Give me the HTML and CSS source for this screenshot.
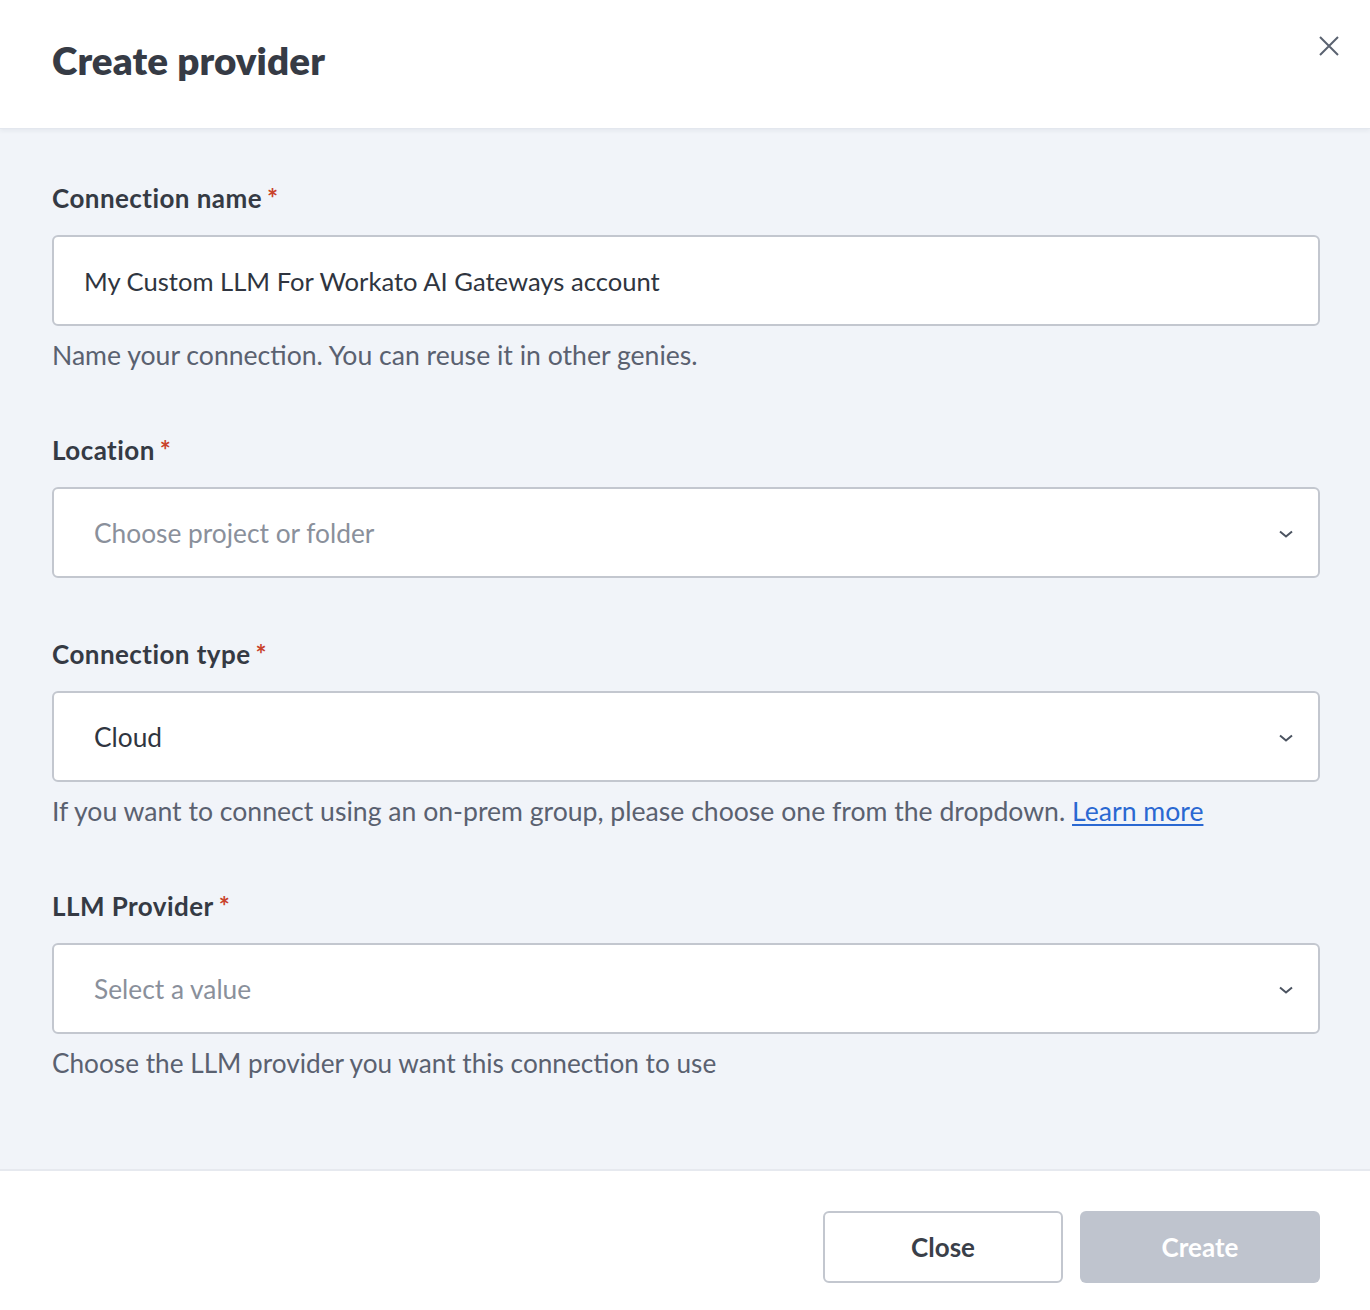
FILE: index.html
```html
<!DOCTYPE html>
<html lang="en">
<head>
<meta charset="utf-8">
<title>Create provider</title>
<link rel="stylesheet" href="styles.css">
</head>
<body>
<div class="dialog">
  <header class="dialog-header">
    <h1 class="dialog-title">Create provider</h1>
    <button class="icon-close" type="button" aria-label="Close">
      <svg width="22" height="22" viewBox="0 0 22 22"><path d="M2 2 L20 20 M20 2 L2 20" stroke="#5a6270" stroke-width="2" fill="none"/></svg>
    </button>
  </header>

  <main class="dialog-body">
    <div class="field">
      <label class="field-label">Connection name<span class="req">*</span></label>
      <div class="control control-input">My Custom LLM For Workato AI Gateways account</div>
      <p class="hint">Name your connection. You can reuse it in other genies.</p>
    </div>

    <div class="field">
      <label class="field-label">Location<span class="req">*</span></label>
      <div class="control control-select">
        <span class="placeholder">Choose project or folder</span>
        <svg class="chev" width="16" height="10" viewBox="0 0 16 10"><path d="M2 2.5 L8 7.5 L14 2.5" stroke="#4b5360" stroke-width="2" fill="none"/></svg>
      </div>
    </div>

    <div class="field">
      <label class="field-label">Connection type<span class="req">*</span></label>
      <div class="control control-select">
        <span class="value">Cloud</span>
        <svg class="chev" width="16" height="10" viewBox="0 0 16 10"><path d="M2 2.5 L8 7.5 L14 2.5" stroke="#4b5360" stroke-width="2" fill="none"/></svg>
      </div>
      <p class="hint">If you want to connect using an on-prem group, please choose one from the dropdown. <a class="link" href="#">Learn more</a></p>
    </div>

    <div class="field">
      <label class="field-label">LLM Provider<span class="req">*</span></label>
      <div class="control control-select">
        <span class="placeholder">Select a value</span>
        <svg class="chev" width="16" height="10" viewBox="0 0 16 10"><path d="M2 2.5 L8 7.5 L14 2.5" stroke="#4b5360" stroke-width="2" fill="none"/></svg>
      </div>
      <p class="hint hint-narrow">Choose the LLM provider you want this connection to use</p>
    </div>
  </main>

  <footer class="dialog-footer">
    <button class="btn btn-secondary" type="button">Close</button>
    <button class="btn btn-primary" type="button" disabled>Create</button>
  </footer>
</div>
</body>
</html>
```

FILE: styles.css
```css
* { box-sizing: border-box; }

html, body {
  margin: 0;
  padding: 0;
  background: #ffffff;
}

body {
  font-family: Lato, "Noto Sans", sans-serif;
  color: #2f3540;
  width: 1370px;
  height: 1310px;
  overflow: hidden;
}

.dialog {
  display: flex;
  flex-direction: column;
  height: 1310px;
}

.dialog-header {
  height: 129px;
  display: flex;
  align-items: flex-start;
  justify-content: space-between;
  padding: 0 30px 0 52px;
  background: #ffffff;
  border-bottom: 1px solid #e3e7ee;
  box-shadow: 0 2px 4px rgba(40, 50, 70, 0.06);
  position: relative;
  z-index: 1;
}

.dialog-title {
  margin: 37px 0 0;
  font-size: 38.6px;
  font-weight: 800;
  line-height: 46px;
  color: #363b45;
  letter-spacing: 0.1px;
}

.icon-close {
  margin-top: 35px;
  padding: 0;
  border: 0;
  background: transparent;
  width: 22px;
  height: 22px;
  cursor: pointer;
}

.dialog-body {
  flex: 1;
  background: #f1f4f9;
  padding: 53px 50px 0 52px;
  display: flex;
  flex-direction: column;
}

.field {
  display: flex;
  flex-direction: column;
  margin-bottom: 62px;
}

.field:nth-child(2) {
  margin-bottom: 60px;
}

.field-label {
  font-size: 26px;
  font-weight: 700;
  line-height: 32px;
  letter-spacing: 0.45px;
  color: #353a44;
  margin-bottom: 21px;
}

.req {
  color: #c9422b;
  margin-left: 5px;
  font-weight: 700;
}

.control {
  height: 91px;
  background: #ffffff;
  border: 2px solid #c3c7cf;
  border-radius: 6px;
  display: flex;
  align-items: center;
  font-size: 26px;
}

.control-input {
  padding-left: 30px;
  font-size: 25.6px;
  color: #2f3540;
}

.control-select {
  padding: 0 24px 0 40px;
  justify-content: space-between;
  font-size: 26.3px;
}

.placeholder { color: #8a909b; }
.value { color: #2f3540; }

.chev { margin-top: 2px; }

.hint {
  margin: 12px 0 0;
  font-size: 26.6px;
  line-height: 34px;
  color: #5a6170;
}

.hint-narrow {
  font-size: 26.2px;
}

.link {
  color: #2a68d2;
  text-decoration: underline;
  text-underline-offset: 3px;
}

.dialog-footer {
  height: 141px;
  background: #ffffff;
  border-top: 2px solid #e6e9ef;
  display: flex;
  justify-content: flex-end;
  align-items: flex-start;
  gap: 17px;
  padding: 40px 50px 0 0;
}

.btn {
  width: 240px;
  height: 72px;
  border-radius: 6px;
  font-family: inherit;
  font-size: 26px;
  font-weight: 700;
}

.btn-secondary {
  background: #ffffff;
  border: 2px solid #c3c7cf;
  color: #3a3f49;
}

.btn-primary {
  background: #bfc4ce;
  border: 0;
  color: #ffffff;
}
```
